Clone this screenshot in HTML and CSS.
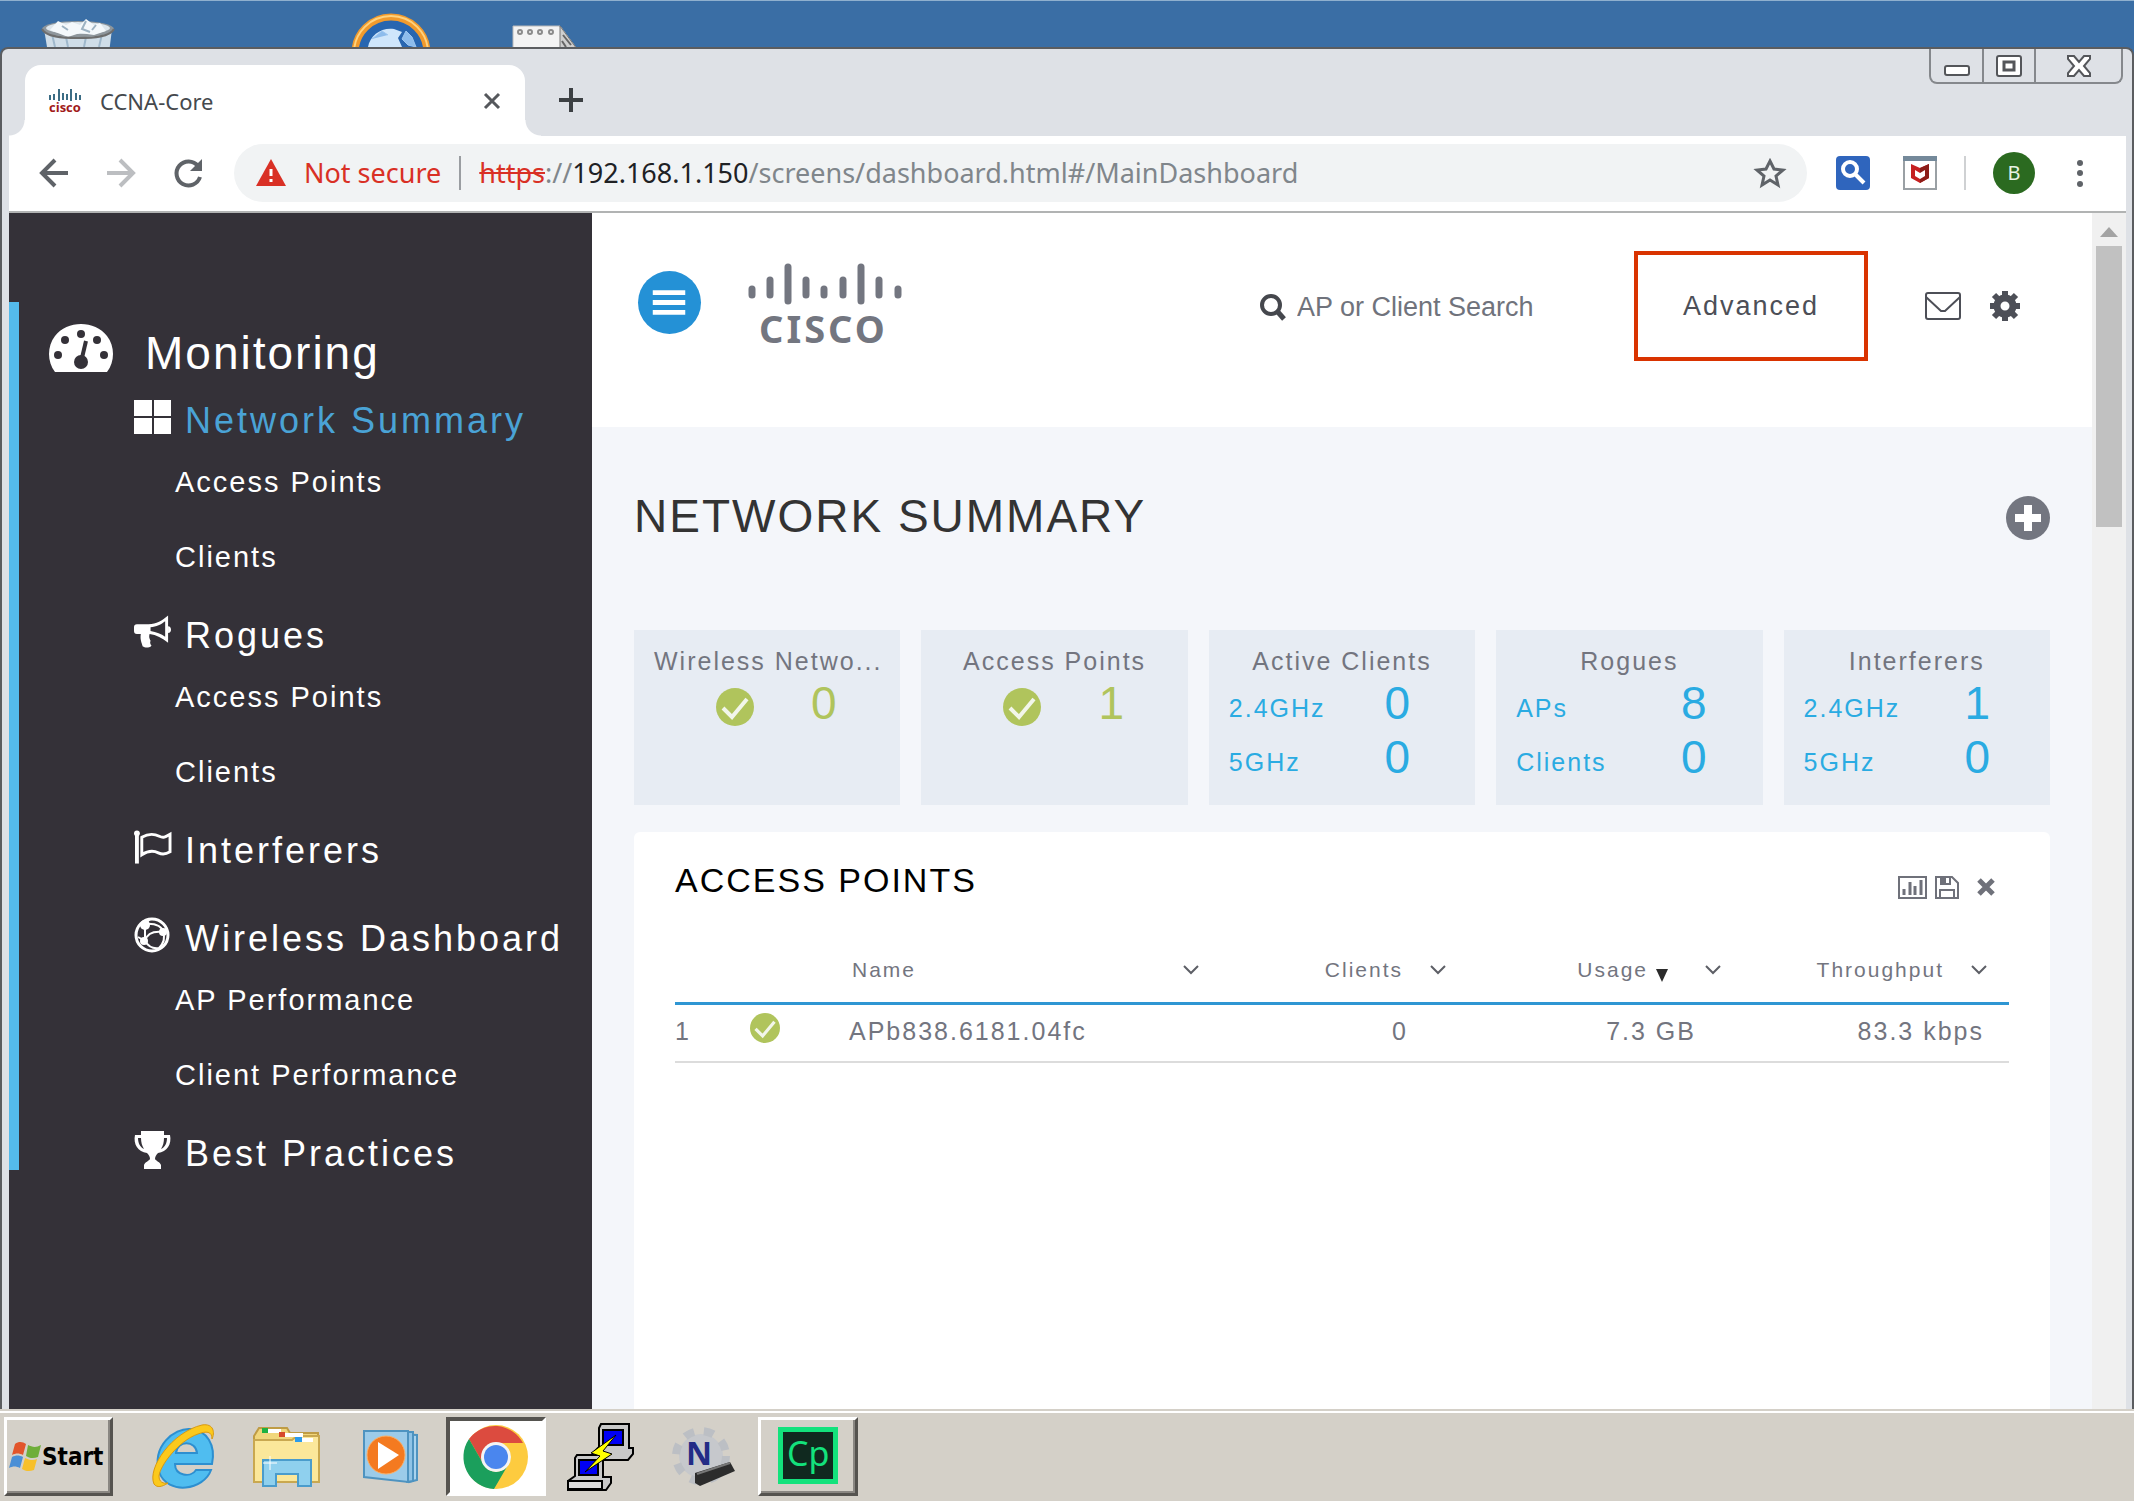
FILE: index.html
```html
<!DOCTYPE html>
<html lang="en">
<head>
<meta charset="utf-8">
<title>CCNA-Core</title>
<link rel="stylesheet" href="styles.css">
</head>
<body>
<svg class="sprite" aria-hidden="true">
  <symbol id="check" viewBox="0 0 38 38"><circle cx="19" cy="19" r="19" fill="#b0c45c"/><path d="M7 20l9 9 15-18" fill="none" stroke="#f2f6ea" stroke-width="4"/></symbol>
  <symbol id="caret" viewBox="0 0 18 12"><path d="M2 2l7 7 7-7" fill="none" stroke="#5d5f66" stroke-width="2"/></symbol>
</svg>

<div class="desktop">
  <svg class="desk-icon desk-icon--bin" viewBox="0 2 76 28" aria-hidden="true">
    <path d="M4 12h68l-3 24H8z" fill="#cfdde8"/><path d="M12 17l3 13M26 20l2 10M46 20l-2 10M62 17l-3 13" stroke="#9fb8cc" stroke-width="2"/>
    <ellipse cx="38" cy="12" rx="36" ry="8" fill="#8e969c"/><ellipse cx="38" cy="11" rx="32" ry="6" fill="#dde6ec"/>
    <path d="M10 13l8-9 8 4 6-3 8 3 6-6 8 6 6-2 6 8-12 4-14-2-12 4z" fill="#f4f8fb"/><path d="M22 9l6 4M46 4l-4 8 8 3M56 8l-4 5" stroke="#9db2c2" stroke-width="2" fill="none"/>
    <path d="M2 12c4 8 20 9 36 9s32-1 36-9" fill="none" stroke="#6d6d6d" stroke-width="2"/>
  </svg>
  <svg class="desk-icon desk-icon--globe" viewBox="0 0 78 34" aria-hidden="true">
    <circle cx="39" cy="40" r="36" fill="#2866b0" stroke="#f19a2c" stroke-width="7"/><circle cx="39" cy="40" r="37" fill="none" stroke="#ffd27d" stroke-width="2"/>
    <path d="M16 34c2-12 14-20 26-18l8 3-4 6 4 9z" fill="#cfe6fb"/><path d="M20 26l10-8 6 4M54 18l6 6 4 10-8-2-6-6z" stroke="#9cc6f0" fill="#8dbcec"/>
  </svg>
  <svg class="desk-icon desk-icon--note" viewBox="0 0 66 22" aria-hidden="true">
    <path d="M1 1h47l17 23H1z" fill="#f3f3f3" stroke="#b9b9b9"/><path d="M48 1l17 23H48z" fill="#cfcfcf" stroke="#777"/><path d="M51 10l8 10M50 16l4 6" stroke="#666" stroke-width="2"/>
    <g fill="none" stroke="#8b8b8b" stroke-width="2"><circle cx="8" cy="7" r="2"/><circle cx="18" cy="7" r="2"/><circle cx="28" cy="7" r="2"/><circle cx="39" cy="7" r="2"/></g>
  </svg>
</div>

<div class="window">
  <div class="titlebar">
    <div class="tab">
      <svg class="tab__icon" viewBox="0 0 33 24" aria-hidden="true">
        <path d="M1 6v5M5 5v6M10 0v12M14 4v7M18 5v6M22 0v12M27 4v7M31 6v5" stroke="#3c6d85" stroke-width="2"/>
        <text x="0" y="23" class="tab__logo-text">cisco</text>
      </svg>
      <span class="tab__title">CCNA-Core</span>
      <button class="icon-btn" aria-label="Close tab"><svg width="18" height="18" viewBox="0 0 18 18"><path d="M2 2l14 14M16 2L2 16" stroke="#55585c" stroke-width="3"/></svg></button>
    </div>
    <button class="icon-btn new-tab" aria-label="New tab"><svg width="26" height="26" viewBox="0 0 26 26"><path d="M13 1v24M1 13h24" stroke="#3c4043" stroke-width="4"/></svg></button>
    <div class="win-controls">
      <button aria-label="Minimize"><svg class="min" width="26" height="12" viewBox="0 0 26 12"><rect x="1" y="1" width="24" height="9" rx="2" fill="#fff" stroke="#54565a" stroke-width="2"/></svg></button>
      <button aria-label="Restore"><svg width="26" height="22" viewBox="0 0 26 22"><rect x="1" y="1" width="24" height="20" rx="2" fill="#fff" stroke="#54565a" stroke-width="2"/><rect x="8" y="7" width="10" height="8" fill="#fff" stroke="#54565a" stroke-width="3"/></svg></button>
      <button aria-label="Close"><svg width="26" height="22" viewBox="0 0 26 22"><path d="M2 1h6l5 6 5-6h6v3l-6 7 6 7v3h-6l-5-6-5 6H2v-3l6-7-6-7z" fill="#fff" stroke="#54565a" stroke-width="2"/></svg></button>
    </div>
  </div>

  <div class="toolbar">
    <button class="icon-btn" aria-label="Back"><svg width="30" height="30" viewBox="0 0 30 30"><path d="M16 2L3 15l13 13M3 15h26" fill="none" stroke="#5f6368" stroke-width="4"/></svg></button>
    <button class="icon-btn" aria-label="Forward"><svg width="30" height="30" viewBox="0 0 30 30"><path d="M14 2l13 13-13 13M27 15H1" fill="none" stroke="#bcbec1" stroke-width="4"/></svg></button>
    <button class="icon-btn" aria-label="Reload"><svg width="30" height="30" viewBox="0 0 30 30"><path d="M25 8A12 12 0 1 0 27 19" fill="none" stroke="#5f6368" stroke-width="4"/><path d="M29 1v12H17z" fill="#5f6368"/></svg></button>
    <div class="omnibox">
      <svg width="30" height="27" viewBox="0 0 30 27" aria-hidden="true"><path d="M15 0l15 27H0z" fill="#d93025"/><path d="M15 10v7M15 20v3" stroke="#fff" stroke-width="3"/></svg>
      <span class="omnibox__warn">Not secure</span>
      <span class="omnibox__sep"></span>
      <span class="omnibox__url"><s>https</s>://<b>192.168.1.150</b>/screens/dashboard.html#/MainDashboard</span>
      <button class="icon-btn" aria-label="Bookmark"><svg width="30" height="30" viewBox="0 0 30 30"><path d="M15 3l4 8 9 1-7 6 2 9-8-5-8 5 2-9-7-6 9-1z" fill="none" stroke="#5f6368" stroke-width="3"/></svg></button>
    </div>
    <button class="icon-btn ext" aria-label="Search extension"><svg width="34" height="34" viewBox="0 0 34 34"><rect width="34" height="34" rx="4" fill="#2f65bd"/><circle cx="14" cy="13" r="7" fill="none" stroke="#fff" stroke-width="4"/><path d="M19 18l9 9" stroke="#fff" stroke-width="4"/></svg></button>
    <button class="icon-btn ext" aria-label="Shield extension"><svg width="34" height="34" viewBox="0 0 34 34"><rect x="1" y="1" width="32" height="32" fill="#fff" stroke="#9aa0a4" stroke-width="2"/><path d="M0 0h34v5H0z" fill="#74899a"/><path d="M8 8l9 4 9-4v14l-9 5-9-5z" fill="#c62020"/><path d="M17 12l9-4v14l-9 5z" fill="#8c1d18"/><path d="M12 14l5 3 5-3v6l-5 3-5-3z" fill="#fff"/></svg></button>
    <span class="toolbar__sep"></span>
    <button class="avatar" aria-label="Profile">B</button>
    <button class="icon-btn" aria-label="Menu"><svg width="8" height="30" viewBox="0 0 8 30"><g fill="#5f6368"><circle cx="4" cy="5" r="3"/><circle cx="4" cy="15" r="3"/><circle cx="4" cy="26" r="3"/></g></svg></button>
  </div>

  <div class="page">
    <nav class="sidebar">
      <div class="menu">
        <h2 class="menu__title">
          <svg width="64" height="48" viewBox="0 0 64 48" aria-hidden="true"><path d="M6 48C-2 38-2 22 6 12 18-4 46-4 58 12c8 10 8 26 0 36z" fill="#fff"/><g fill="#343138"><circle cx="9" cy="31" r="4"/><circle cx="16" cy="16" r="4"/><circle cx="32" cy="10" r="4"/><circle cx="48" cy="16" r="4"/><circle cx="55" cy="31" r="4"/><circle cx="32" cy="38" r="7"/></g><path d="M32 38l5-21" stroke="#343138" stroke-width="4"/></svg>
          Monitoring
        </h2>
        <a class="menu__item menu__item--active" href="#network"><svg width="37" height="34" viewBox="0 0 37 34" aria-hidden="true"><path d="M0 0h18v16H0zM20 0h17v16H20zM0 18h18v16H0zM20 18h17v16H20z" fill="#fff"/></svg>Network Summary</a>
        <a class="menu__sub" href="#aps">Access Points</a>
        <a class="menu__sub" href="#clients">Clients</a>
        <a class="menu__item" href="#rogues"><svg width="38" height="34" viewBox="0 0 38 34" aria-hidden="true"><path d="M3 9h12C23 9 29 5 35 0v28c-6-5-12-8-19-9-1 3 0 5 1 7-1 2 0 4 1 5-3 3-7 2-9 1-1-4-3-7-2-13H3c-2 0-3-1-3-3v-4c0-2 1-3 3-3z" fill="#fff"/><path d="M32 6v16c-4-3-9-5-15-6v-4c6 0 11-3 15-6z" fill="#343138"/><path d="M35 11c4 0 4 7 0 7z" fill="#fff"/></svg>Rogues</a>
        <a class="menu__sub" href="#rogue-aps">Access Points</a>
        <a class="menu__sub" href="#rogue-clients">Clients</a>
        <a class="menu__item menu__item--alone" href="#interferers"><svg width="38" height="34" viewBox="0 0 38 34" aria-hidden="true"><path d="M3 2v32" stroke="#fff" stroke-width="4"/><circle cx="3" cy="3" r="3" fill="#fff"/><path d="M8 7c7-4 12-4 18-1 4 2 6 1 11-2v18c-5 3-8 3-12 1-6-3-11-2-17 2z" fill="none" stroke="#fff" stroke-width="3"/></svg>Interferers</a>
        <a class="menu__item" href="#wireless"><svg width="37" height="36" viewBox="0 0 37 36" aria-hidden="true"><circle cx="18" cy="18" r="16" fill="none" stroke="#fff" stroke-width="3"/><path d="M10 7c11-1 18 2 20 9M11 8v16M11 24C13 16 20 14 29 15M29 15c2 5 1 11-4 16M4 20l7 4c3 5 8 8 14 7M16 2l-5 5" fill="none" stroke="#fff" stroke-width="2"/><circle cx="11" cy="8" r="5" fill="#fff"/><circle cx="29" cy="15" r="4" fill="#fff"/><circle cx="10" cy="24" r="4" fill="#fff"/></svg>Wireless Dashboard</a>
        <a class="menu__sub" href="#ap-perf">AP Performance</a>
        <a class="menu__sub" href="#client-perf">Client Performance</a>
        <a class="menu__item menu__item--last" href="#best"><svg width="37" height="38" viewBox="0 0 37 38" aria-hidden="true"><path d="M7 0h23v4h6c2 9-3 17-12 18-2 2-3 4-3 6 1 2 5 3 6 6v4H10v-4c1-3 5-4 6-6 0-2-1-4-3-6C4 21-1 13 1 4h6z" fill="#fff"/><path d="M4 7h3c0 4 1 8 3 11C6 16 4 12 4 7zM33 7h-3c0 4-1 8-3 11 4-2 6-6 6-11z" fill="#343138"/></svg>Best Practices</a>
      </div>
    </nav>

    <div class="content">
      <header class="header">
        <button class="icon-btn burger" aria-label="Toggle menu"><svg width="63" height="63" viewBox="0 0 64 64"><circle cx="32" cy="32" r="32" fill="#2491d6"/><path d="M15 22h33M15 32h33M15 42h33" stroke="#fff" stroke-width="5"/></svg></button>
        <svg class="logo" width="156" height="82" viewBox="0 0 156 82" role="img" aria-label="Cisco">
          <path d="M5 26v6M23 17v15M41 4v34M59 17v15M77 26v6M96 17v15M114 4v34M132 17v15M151 26v6" stroke="#737680" stroke-width="7" stroke-linecap="round"/>
          <text x="12" y="80" class="logo__text">CISCO</text>
        </svg>
        <label class="search">
          <svg width="26" height="27" viewBox="0 0 26 27" aria-hidden="true"><circle cx="11" cy="11" r="9" fill="none" stroke="#45474d" stroke-width="4"/><path d="M17 17l7 8" stroke="#45474d" stroke-width="5"/></svg>
          <input type="text" placeholder="AP or Client Search" aria-label="AP or Client Search">
        </label>
        <button class="advanced">Advanced</button>
        <button class="icon-btn mail" aria-label="Messages"><svg width="36" height="28" viewBox="0 0 36 28"><rect x="1" y="1" width="34" height="26" rx="2" fill="none" stroke="#4d4f57" stroke-width="2"/><path d="M1 5l15 14h4L35 5" fill="none" stroke="#4d4f57" stroke-width="2"/></svg></button>
        <button class="icon-btn gear" aria-label="Settings"><svg width="31" height="31" viewBox="0 0 31 31"><circle cx="15" cy="15" r="8" fill="none" stroke="#4d4f57" stroke-width="7"/><path d="M15 0v5M15 25v5M0 15h5M25 15h5M4 4l4 4M22 22l4 4M26 4l-4 4M8 22l-4 4" stroke="#4d4f57" stroke-width="6"/></svg></button>
      </header>

      <main class="main">
        <div class="heading">
          <h1>NETWORK SUMMARY</h1>
          <button class="icon-btn heading__add" aria-label="Add widget"><svg width="44" height="44" viewBox="0 0 44 44"><circle cx="22" cy="22" r="22" fill="#737680"/><path d="M22 9v26M9 22h26" stroke="#fff" stroke-width="8"/></svg></button>
        </div>

        <div class="tiles">
          <section class="tile"><h3>Wireless Netwo...</h3><div class="tile__status"><svg width="38" height="38"><use href="#check"/></svg><span class="num">0</span></div></section>
          <section class="tile"><h3>Access Points</h3><div class="tile__status"><svg width="38" height="38"><use href="#check"/></svg><span class="num">1</span></div></section>
          <section class="tile tile--active"><h3>Active Clients</h3><div class="tile__row"><span>2.4GHz</span><span class="num">0</span></div><div class="tile__row"><span>5GHz</span><span class="num">0</span></div></section>
          <section class="tile tile--rogues"><h3>Rogues</h3><div class="tile__row"><span>APs</span><span class="num">8</span></div><div class="tile__row"><span>Clients</span><span class="num">0</span></div></section>
          <section class="tile"><h3>Interferers</h3><div class="tile__row"><span>2.4GHz</span><span class="num">1</span></div><div class="tile__row"><span>5GHz</span><span class="num">0</span></div></section>
        </div>

        <section class="panel">
          <div class="panel__head">
            <h2>ACCESS POINTS</h2>
            <button class="icon-btn" aria-label="Chart view"><svg width="29" height="23" viewBox="0 0 29 23"><rect x="1" y="1" width="27" height="21" fill="none" stroke="#6f717a" stroke-width="2"/><path d="M6 13v6M12 6v13M17 10v9M23 4v15" stroke="#6f717a" stroke-width="3"/></svg></button>
            <button class="icon-btn save" aria-label="Save"><svg width="24" height="23" viewBox="0 0 24 23"><path d="M1 1h16l6 6v15H1z" fill="none" stroke="#6f717a" stroke-width="2"/><path d="M5 22v-8h14v8" fill="none" stroke="#6f717a" stroke-width="2"/><path d="M5 1h11v8H5z" fill="#6f717a"/><path d="M11 2h3v5h-3z" fill="#fff"/></svg></button>
            <button class="icon-btn remove" aria-label="Remove"><svg width="18" height="18" viewBox="0 0 18 18"><path d="M2 2l14 14M16 2L2 16" stroke="#6f717a" stroke-width="5"/></svg></button>
          </div>
          <table class="grid">
            <colgroup><col class="c-idx"><col class="c-status"><col><col class="c-clients"><col class="c-usage"><col class="c-rate"></colgroup>
            <thead><tr>
              <th></th><th></th>
              <th><div class="th th--name">Name<svg width="18" height="12"><use href="#caret"/></svg></div></th>
              <th><div class="th">Clients<svg width="18" height="12"><use href="#caret"/></svg></div></th>
              <th><div class="th">Usage<svg class="sort" width="12" height="13" viewBox="0 0 12 13"><path d="M0 0h12L6 13z" fill="#2b2b2b"/></svg><svg width="18" height="12"><use href="#caret"/></svg></div></th>
              <th><div class="th">Throughput<svg width="18" height="12"><use href="#caret"/></svg></div></th>
            </tr></thead>
            <tbody><tr>
              <td>1</td><td><svg class="ok" width="30" height="30"><use href="#check"/></svg></td><td>APb838.6181.04fc</td>
              <td class="v-clients">0</td><td class="v-usage">7.3 GB</td><td class="v-rate">83.3 kbps</td>
            </tr></tbody>
          </table>
        </section>
      </main>
    </div>

    <div class="scrollbar"><svg width="18" height="10" viewBox="0 0 18 10" aria-hidden="true"><path d="M9 0l9 10H0z" fill="#a3a3a3"/></svg><div class="scrollbar__thumb"></div></div>
  </div>
</div>

<footer class="taskbar">
  <button class="start"><svg width="33" height="30" viewBox="0 0 33 30" aria-hidden="true"><path d="M6 2c4-3 8-2 11 0l-3 11c-4-2-7-2-11 0z" fill="#e2552b"/><path d="M19 3c4 2 8 3 13 0l-3 12c-5 2-9 1-12-1z" fill="#6fae3a"/><path d="M3 15c4-2 7-2 11 0l-3 11c-4-2-7-2-11 0z" fill="#4a8fd6"/><path d="M16 16c4 2 8 3 12 1l-3 11c-5 2-9 1-12-1z" fill="#f7c02b"/></svg>Start</button>
  <button class="task" aria-label="Internet Explorer"><svg width="64" height="66" viewBox="0 0 64 66"><path d="M60 40H23c0 12 16 14 21 6h15C52 66 16 72 7 48 0 22 22 4 38 5c17 1 26 16 22 35zM24 29h21c-1-13-20-13-21 0z" fill="#4fbdf0" stroke="#2d8fd0" stroke-width="2"/><path d="M2 60C-5 44 20 8 50 1c12-2 13 8 10 14 0-8-6-8-14-5C26 17 8 42 7 52c0 6 4 8 9 7-6 4-11 5-14 1z" fill="#fcc91c" stroke="#d99a10"/></svg></button>
  <button class="task" aria-label="File Explorer"><svg width="68" height="62" viewBox="0 0 68 62"><path d="M1 54V10l5-8h28l3 5h28v47z" fill="#f1d77c" stroke="#bf9c45" stroke-width="2"/><path d="M1 56V14h38l5-4h22v46z" fill="#fbe79a" stroke="#c9a850" stroke-width="2"/><path d="M14 3h14v4H14zM32 7h18v4H32zM46 12h14v4H46z" fill="#fff"/><path d="M9 2h6v5H9z" fill="#1fb141"/><path d="M26 6h6v5h-6z" fill="#d64a2b"/><path d="M42 11h7v5h-7z" fill="#2b9bea"/><path d="M10 34h48v26H45V48H23v12H10z" fill="#8fd0ee" stroke="#4a9ccc" stroke-width="2"/><path d="M17 30v14M10 37h14" stroke="#fff"/></svg></button>
  <button class="task task--media" aria-label="Media Player"><svg width="60" height="54" viewBox="0 0 60 54"><path d="M12 3l42 2v45l-8 2z" fill="#a9d3ee" stroke="#4e93c0" stroke-width="2"/><path d="M8 2h42v49l-6 1z" fill="#8fc3e6" stroke="#4e93c0" stroke-width="2"/><path d="M1 1h44v51L1 47z" fill="#9ccbe9" stroke="#4e93c0" stroke-width="2"/><circle cx="23" cy="25" r="19" fill="#f47a20" stroke="#fbb068"/><path d="M15 12l21 13-21 14z" fill="#fff"/></svg></button>
  <button class="task task--pressed" aria-label="Google Chrome"><svg width="64" height="64" viewBox="0 0 64 64"><circle cx="32" cy="32" r="32" fill="#fdcb3f"/><path d="M32 18h27A32 32 0 0 0 5 14l15 26z" fill="#dc4b3f"/><path d="M5 14a32 32 0 0 0 25 50l14-24a14 14 0 0 1-24 0z" fill="#1b9f5c"/><circle cx="32" cy="32" r="15" fill="#f4f4f4"/><circle cx="32" cy="32" r="12" fill="#4a86ee"/></svg></button>
  <button class="task" aria-label="PuTTY"><svg width="68" height="68" viewBox="0 0 68 68"><g stroke="#000" stroke-width="2"><path d="M34 1h28v24h4v6l-5 6H34l-6-3v-6l4-4V5z" fill="#c8c8c8"/><path d="M36 7h20v15H36z" fill="#0000f4"/><path d="M10 32h26v22h8v6l-5 7H1v-9l7-5V35z" fill="#c8c8c8"/><path d="M12 37h19v15H12z" fill="#0000f4"/><path d="M1 58h34v8H1z" fill="#ddd"/></g><path d="M49 12L24 30l9 3-15 16 27-18-9-3z" fill="#ff0" stroke="#000"/></svg></button>
  <button class="task" aria-label="Network tool"><svg width="64" height="62" viewBox="0 0 64 62"><circle cx="29" cy="30" r="22" fill="#c6c8cc"/><circle cx="29" cy="30" r="25" fill="none" stroke="#bcbfc4" stroke-width="8" stroke-dasharray="10 10"/><text x="14" y="39" class="net-logo">N</text><path d="M23 47l35-11 5 9-35 15-5-3z" fill="#2c2c2c"/><path d="M25 48l33-11" stroke="#777" stroke-width="2"/></svg></button>
  <button class="task task--raised" aria-label="Captivate"><svg width="60" height="60" viewBox="0 0 60 60"><rect width="60" height="57" fill="#13e27c"/><rect x="5" y="5" width="50" height="47" fill="#10291f"/><text x="9" y="39" class="cp-logo">Cp</text></svg></button>
</footer>
</body>
</html>
```
FILE: styles.css
```css
* { box-sizing: border-box; }
body {
  margin: 0;
  height: 100vh;
  display: flex;
  flex-direction: column;
  overflow: hidden;
  background: #3a6ea5;
  font-family: "Liberation Sans", Arial, sans-serif;
}
h1, h2, h3 { margin: 0; font-weight: 400; }
button { padding: 0; border: 0; background: none; font: inherit; color: inherit; }
svg { display: block; flex: none; overflow: visible; }
a { color: inherit; text-decoration: none; }
.sprite { position: absolute; width: 0; height: 0; overflow: hidden; }
.icon-btn { display: block; flex: none; }

/* desktop */
.desktop { position: relative; flex: none; height: 47px; border-top: 1px solid #8fb0ce; overflow: hidden; }
.desk-icon { position: absolute; bottom: 0; }
.desk-icon--bin { left: 40px; width: 76px; height: 28px; }
.desk-icon--globe { left: 352px; width: 78px; height: 34px; }
.desk-icon--note { left: 512px; width: 66px; height: 22px; }

/* browser window */
.window {
  flex: 1;
  min-height: 0;
  display: flex;
  flex-direction: column;
  border: 2px solid #5b5d60;
  border-bottom: 0;
  border-radius: 8px 8px 0 0;
  padding: 0 6px 0 7px;
  background: #dee1e6;
  font-family: "Noto Sans", "Open Sans", sans-serif;
}
.titlebar { flex: none; display: flex; align-items: flex-end; height: 87px; }
.tab {
  position: relative;
  display: flex;
  align-items: center;
  width: 500px;
  height: 71px;
  margin-left: 16px;
  padding: 0 24px;
  background: #fff;
  border-radius: 16px 16px 0 0;
}
.tab::before, .tab::after { content: ""; position: absolute; bottom: 0; width: 16px; height: 16px; }
.tab::before { left: -16px; background: radial-gradient(circle at 0 0, #dee1e6 15px, #fff 16px); }
.tab::after { right: -16px; background: radial-gradient(circle at 100% 0, #dee1e6 15px, #fff 16px); }
.tab__icon { width: 33px; height: 24px; }
.tab__logo-text { font: 700 13px "Open Sans", sans-serif; fill: #a11a1a; }
.tab__title { flex: 1; margin-left: 18px; font-size: 22px; line-height: 32px; color: #45494d; }
.new-tab { margin: 0 0 23px 33px; }
.win-controls {
  display: flex;
  align-self: flex-start;
  margin: 0 3px 0 auto;
  height: 35px;
  border: 2px solid #85888c;
  border-top: 0;
  border-radius: 0 0 8px 8px;
}
.win-controls button { display: grid; place-items: center; width: 51px; }
.win-controls button + button { border-left: 2px solid #85888c; width: 52px; }
.win-controls button:last-child { width: 87px; }
.win-controls .min { margin-top: 10px; }

.toolbar {
  flex: none;
  display: flex;
  align-items: center;
  height: 77px;
  padding: 0 42px 2px 30px;
  gap: 37px;
  background: #fff;
  border-bottom: 2px solid #b1b3b3;
}
.omnibox {
  flex: 1;
  display: flex;
  align-items: center;
  height: 58px;
  margin-left: -6px;
  padding: 0 22px;
  border-radius: 29px;
  background: #f1f3f4;
  font-size: 27px;
  line-height: 40px;
  white-space: nowrap;
}
.omnibox__warn { margin-left: 18px; color: #d93025; }
.omnibox__sep { width: 2px; height: 34px; margin: 0 18px; background: #9a9da1; }
.omnibox__url { flex: 1; color: #80868b; }
.omnibox__url s { color: #d93025; }
.omnibox__url b { font-weight: 400; color: #202124; }
.ext { margin: 0 -4px 0 -8px; }
.ext + .ext { margin-left: 0; }
.toolbar__sep { width: 2px; height: 34px; margin: 0 -6px; background: #cfd1d3; }
.avatar { width: 42px; height: 42px; margin: 0 4px 0 -4px; border-radius: 50%; background: #2b6a20; color: #e8f3e5; font-size: 20px; }

/* page */
.page { flex: 1; min-height: 0; display: flex; background: #f4f6fa; font-family: "Liberation Sans", Arial, sans-serif; }
.sidebar { flex: none; width: 583px; padding-top: 89px; background: #343138; color: #fff; overflow: hidden; }
.menu { display: flex; flex-direction: column; padding: 22px 0 0 30px; border-left: 10px solid #54bbec; letter-spacing: 2px; white-space: nowrap; }
.menu__title { display: flex; align-items: center; gap: 32px; margin-bottom: 19px; font-size: 46px; line-height: 54px; }
.menu__title svg { margin-bottom: 10px; }
.menu__item { display: flex; align-items: center; gap: 14px; height: 40px; margin: 0 0 25px 85px; font-size: 36px; line-height: 40px; letter-spacing: 3px; }
.menu__item svg { width: 37px; margin-bottom: 8px; }
.menu__item--active { color: #4aa3d6; }
.menu__item--alone { margin-bottom: 48px; }
.menu__item--last { margin-bottom: -4px; }
.menu__sub { margin-left: 126px; padding-bottom: 43px; font-size: 29px; line-height: 32px; }

.content { flex: 1; min-width: 0; display: flex; flex-direction: column; }
.header { flex: none; display: flex; align-items: center; padding: 38px 71px 66px 46px; background: #fff; color: #4d4f57; }
.burger { margin-bottom: 8px; }
.logo { margin: 0 0 4px 46px; }
.logo__text { font: 700 38px "Noto Sans", sans-serif; letter-spacing: 3px; fill: #737680; }
.search { display: flex; align-items: center; gap: 11px; width: 338px; margin: 2px 36px 0 auto; }
.search input { flex: 1; min-width: 0; padding: 0; border: 0; outline: 0; background: none; font: 27px/32px "Liberation Sans", Arial, sans-serif; color: #70737c; }
.search input::placeholder { color: #70737c; opacity: 1; }
.advanced { width: 234px; height: 110px; border: 4px solid #d93300; font-size: 27px; letter-spacing: 2px; }
.mail { margin-left: 57px; }
.gear { margin-left: 29px; }

.main { flex: 1; min-height: 0; display: flex; flex-direction: column; padding: 61px 42px 0; letter-spacing: 2px; color: #73757f; }
.heading { display: flex; align-items: center; justify-content: space-between; margin-bottom: 86px; }
.heading h1 { font-size: 46px; line-height: 56px; color: #333; }
.heading__add { margin-top: 4px; }
.tiles { display: grid; grid-template-columns: repeat(5, minmax(0, 1fr)); gap: 21px; margin-bottom: 27px; }
.tile { min-height: 175px; padding: 16px 60px 0 20px; background: #e7ecf3; font-size: 25px; }
.tile--active { padding-right: 65px; }
.tile--rogues { padding-right: 56px; }
.tile h3 { margin-right: -40px; font-size: 25px; line-height: 30px; text-align: center; white-space: nowrap; }
.tile--active h3 { margin-right: -45px; }
.tile--rogues h3 { margin-right: -36px; }
.tile__row, .tile__status { display: flex; align-items: center; justify-content: space-between; height: 54px; color: #2aabe2; }
.tile__row span:first-child { padding-top: 10px; }
.tile__status { justify-content: flex-start; gap: 57px; padding-left: 62px; color: #b0c45c; }
.tile__status svg { margin-top: 8px; }
.num { font-size: 46px; line-height: 54px; letter-spacing: 0; }

.panel { flex: 1; min-height: 0; padding: 28px 41px 0; border-radius: 6px 6px 0 0; background: #fff; }
.panel__head { display: flex; align-items: center; padding-right: 14px; }
.panel__head h2 { flex: 1; font-size: 34px; line-height: 40px; color: #000; }
.panel__head button { margin-top: 14px; }
.panel__head .save { margin-left: 8px; }
.panel__head .remove { margin-left: 18px; }
.grid { width: 100%; margin-top: 40px; border-collapse: collapse; table-layout: fixed; }
.c-idx { width: 75px; }
.c-status { width: 99px; }
.c-clients { width: 247px; }
.c-usage { width: 275px; }
.c-rate { width: 266px; }
.grid th { padding: 16px 21px 18px 0; font-size: 21px; font-weight: 400; line-height: 28px; border-bottom: 3px solid #2e96d3; }
.th { display: flex; align-items: center; justify-content: flex-end; gap: 26px; }
.th--name { justify-content: space-between; padding-left: 3px; }
.sort { margin: 10px 10px 0 -18px; }
.grid td { padding: 0 0 4px; font-size: 25px; line-height: 52px; border-bottom: 2px solid #dcdcdc; }
.ok { margin-bottom: 6px; }
.grid .v-clients { text-align: right; padding-right: 60px; }
.grid .v-usage { text-align: right; padding-right: 47px; }
.grid .v-rate { text-align: right; padding-right: 25px; }

.scrollbar { flex: none; display: flex; flex-direction: column; align-items: center; width: 34px; padding: 14px 4px 0; background: #f0f0f0; }
.scrollbar__thumb { width: 26px; height: 281px; margin-top: 9px; background: #c1c1c1; }

/* taskbar */
.taskbar { flex: none; display: flex; align-items: center; height: 92px; padding: 4px 4px 3px; border-top: 2px solid #d4d0c8; box-shadow: inset 0 2px #fff; background: #d4d0c8; }
.start, .task--raised { border: 3px solid; border-color: #fff #55534f #55534f #fff; box-shadow: inset -2px -2px #8a8782; }
.start { display: flex; align-items: center; width: 109px; height: 79px; margin-right: 39px; padding-left: 2px; color: #000; font: 700 24px "DejaVu Sans Condensed", "DejaVu Sans", sans-serif; }
.task { display: grid; place-items: center; flex: none; height: 79px; }
.task + .task { margin-left: 37px; }
.task--pressed, .task--raised { width: 100px; }
.task--pressed { border: 4px solid; border-color: #55534f #fff #fff #55534f; background: #fff; }
.task.task--media { margin-left: 42px; }
.task.task--pressed { margin-left: 23px; }
.task--pressed + .task { margin-left: 21px; }
.task.task--raised { margin-left: 22px; }
.net-logo { font: 700 32px "Noto Sans", sans-serif; fill: #232c86; }
.cp-logo { font: 34px "Noto Sans", sans-serif; fill: #13e27c; }
```
